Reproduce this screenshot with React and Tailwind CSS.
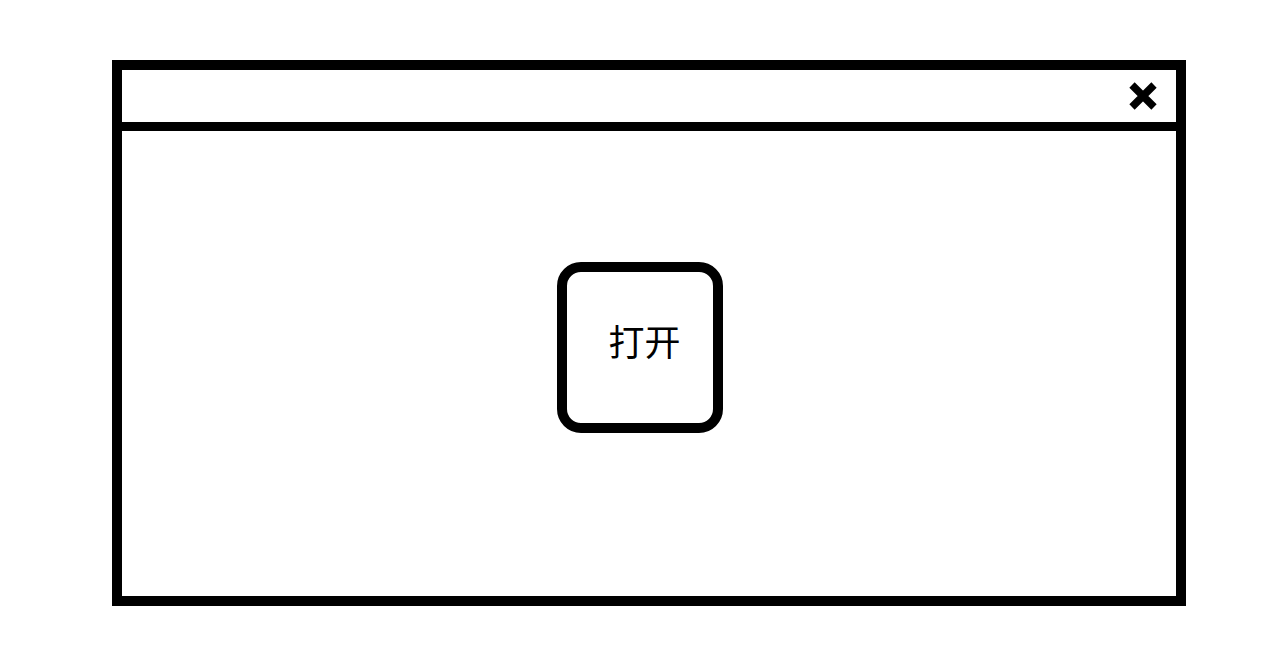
import React from "react";

export default function App() {
  return (
    <div className="w-[1284px] h-[648px] bg-white pt-[60px] pl-[112px]">
      {/* Window */}
      <div className="w-[1074px] h-[546px] border-[10px] border-black flex flex-col">
        {/* Title bar */}
        <div className="h-[61px] border-b-[9px] border-black flex items-center justify-end pr-[18px]">
          <svg width="30" height="30" viewBox="0 0 30 30">
            <path d="M4 4 L26 26 M26 4 L4 26" stroke="#000" strokeWidth="7.5" strokeLinecap="butt" />
          </svg>
        </div>

        {/* Body */}
        <div className="flex-1 flex items-start">
          <button
            className="ml-[435px] mt-[131px] w-[166px] h-[171px] border-[10px] border-black rounded-[24px] bg-white flex items-center justify-center pl-[9px] pb-[16px] text-[36px] text-black"
            style={{ fontFamily: '"Noto Sans CJK SC", "Noto Sans", sans-serif' }}
          >
            打开
          </button>
        </div>
      </div>
    </div>
  );
}
